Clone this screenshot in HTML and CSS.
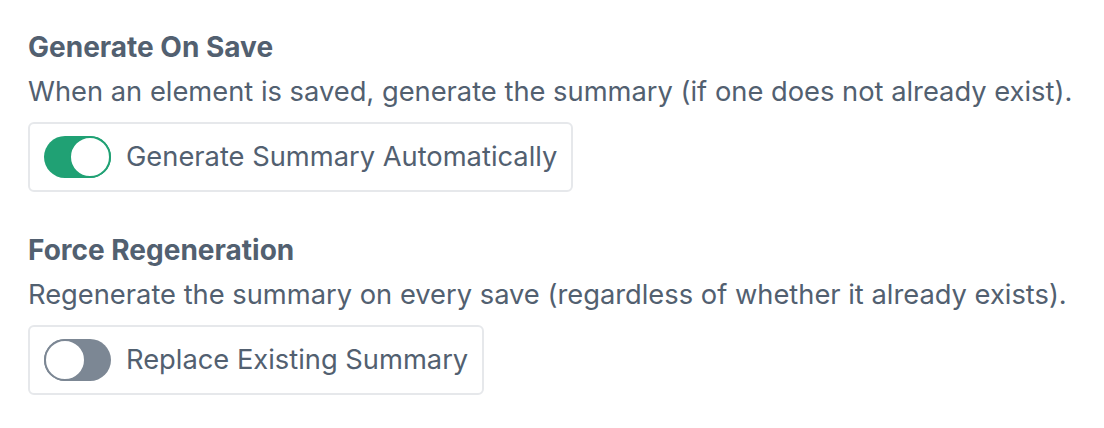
FILE: index.html
```html
<!DOCTYPE html>
<html lang="en">
<head>
  <meta charset="UTF-8" />
  <title>Summary Settings</title>
  <meta name="viewport" content="width=device-width, initial-scale=1.0" />
  <link rel="stylesheet" href="styles.css">
</head>
<body>
  <div class="settings">
    <div class="field">
      <h3 class="field-heading">Generate On Save</h3>
      <p class="instructions">When an element is saved, generate the summary (if one does not already exist).</p>
      <label class="switch-box">
        <span class="lightswitch on"><span class="knob"></span></span>
        <span class="switch-label">Generate Summary Automatically</span>
      </label>
    </div>

    <div class="field">
      <h3 class="field-heading">Force Regeneration</h3>
      <p class="instructions">Regenerate the summary on every save (regardless of whether it already exists).</p>
      <label class="switch-box">
        <span class="lightswitch"><span class="knob"></span></span>
        <span class="switch-label">Replace Existing Summary</span>
      </label>
    </div>
  </div>
</body>
</html>
```

FILE: styles.css
```css
body {
  margin: 0;
  padding: 0;
  background: #ffffff;
  color: #526070;
  font-family: Inter, 'Noto Sans', sans-serif;
}

.settings {
  padding: 30px 28px 0;
}

.field {
  margin-bottom: 41px;
}

.field-heading {
  margin: 0;
  font-size: 28px;
  font-weight: 700;
  line-height: 34px;
}

.instructions {
  margin: 10px 0 12px;
  font-size: 27.3px;
  line-height: 36px;
}

.switch-box {
  display: flex;
  width: fit-content;
  align-items: center;
  gap: 15px;
  padding: 12px 14px;
  border: 2px solid #e6e8eb;
  border-radius: 6px;
  cursor: pointer;
}

.lightswitch {
  display: flex;
  width: 67px;
  height: 42px;
  border-radius: 21px;
  background: #7c8794;
  justify-content: flex-start;
}

.lightswitch.on {
  background: #20a174;
  justify-content: flex-end;
}

.knob {
  width: 38px;
  height: 38px;
  border: 2px solid #7c8794;
  border-radius: 50%;
  background: #ffffff;
}

.lightswitch.on .knob {
  border-color: #20a174;
}

.switch-label {
  font-size: 27.3px;
  line-height: 36px;
}
```
